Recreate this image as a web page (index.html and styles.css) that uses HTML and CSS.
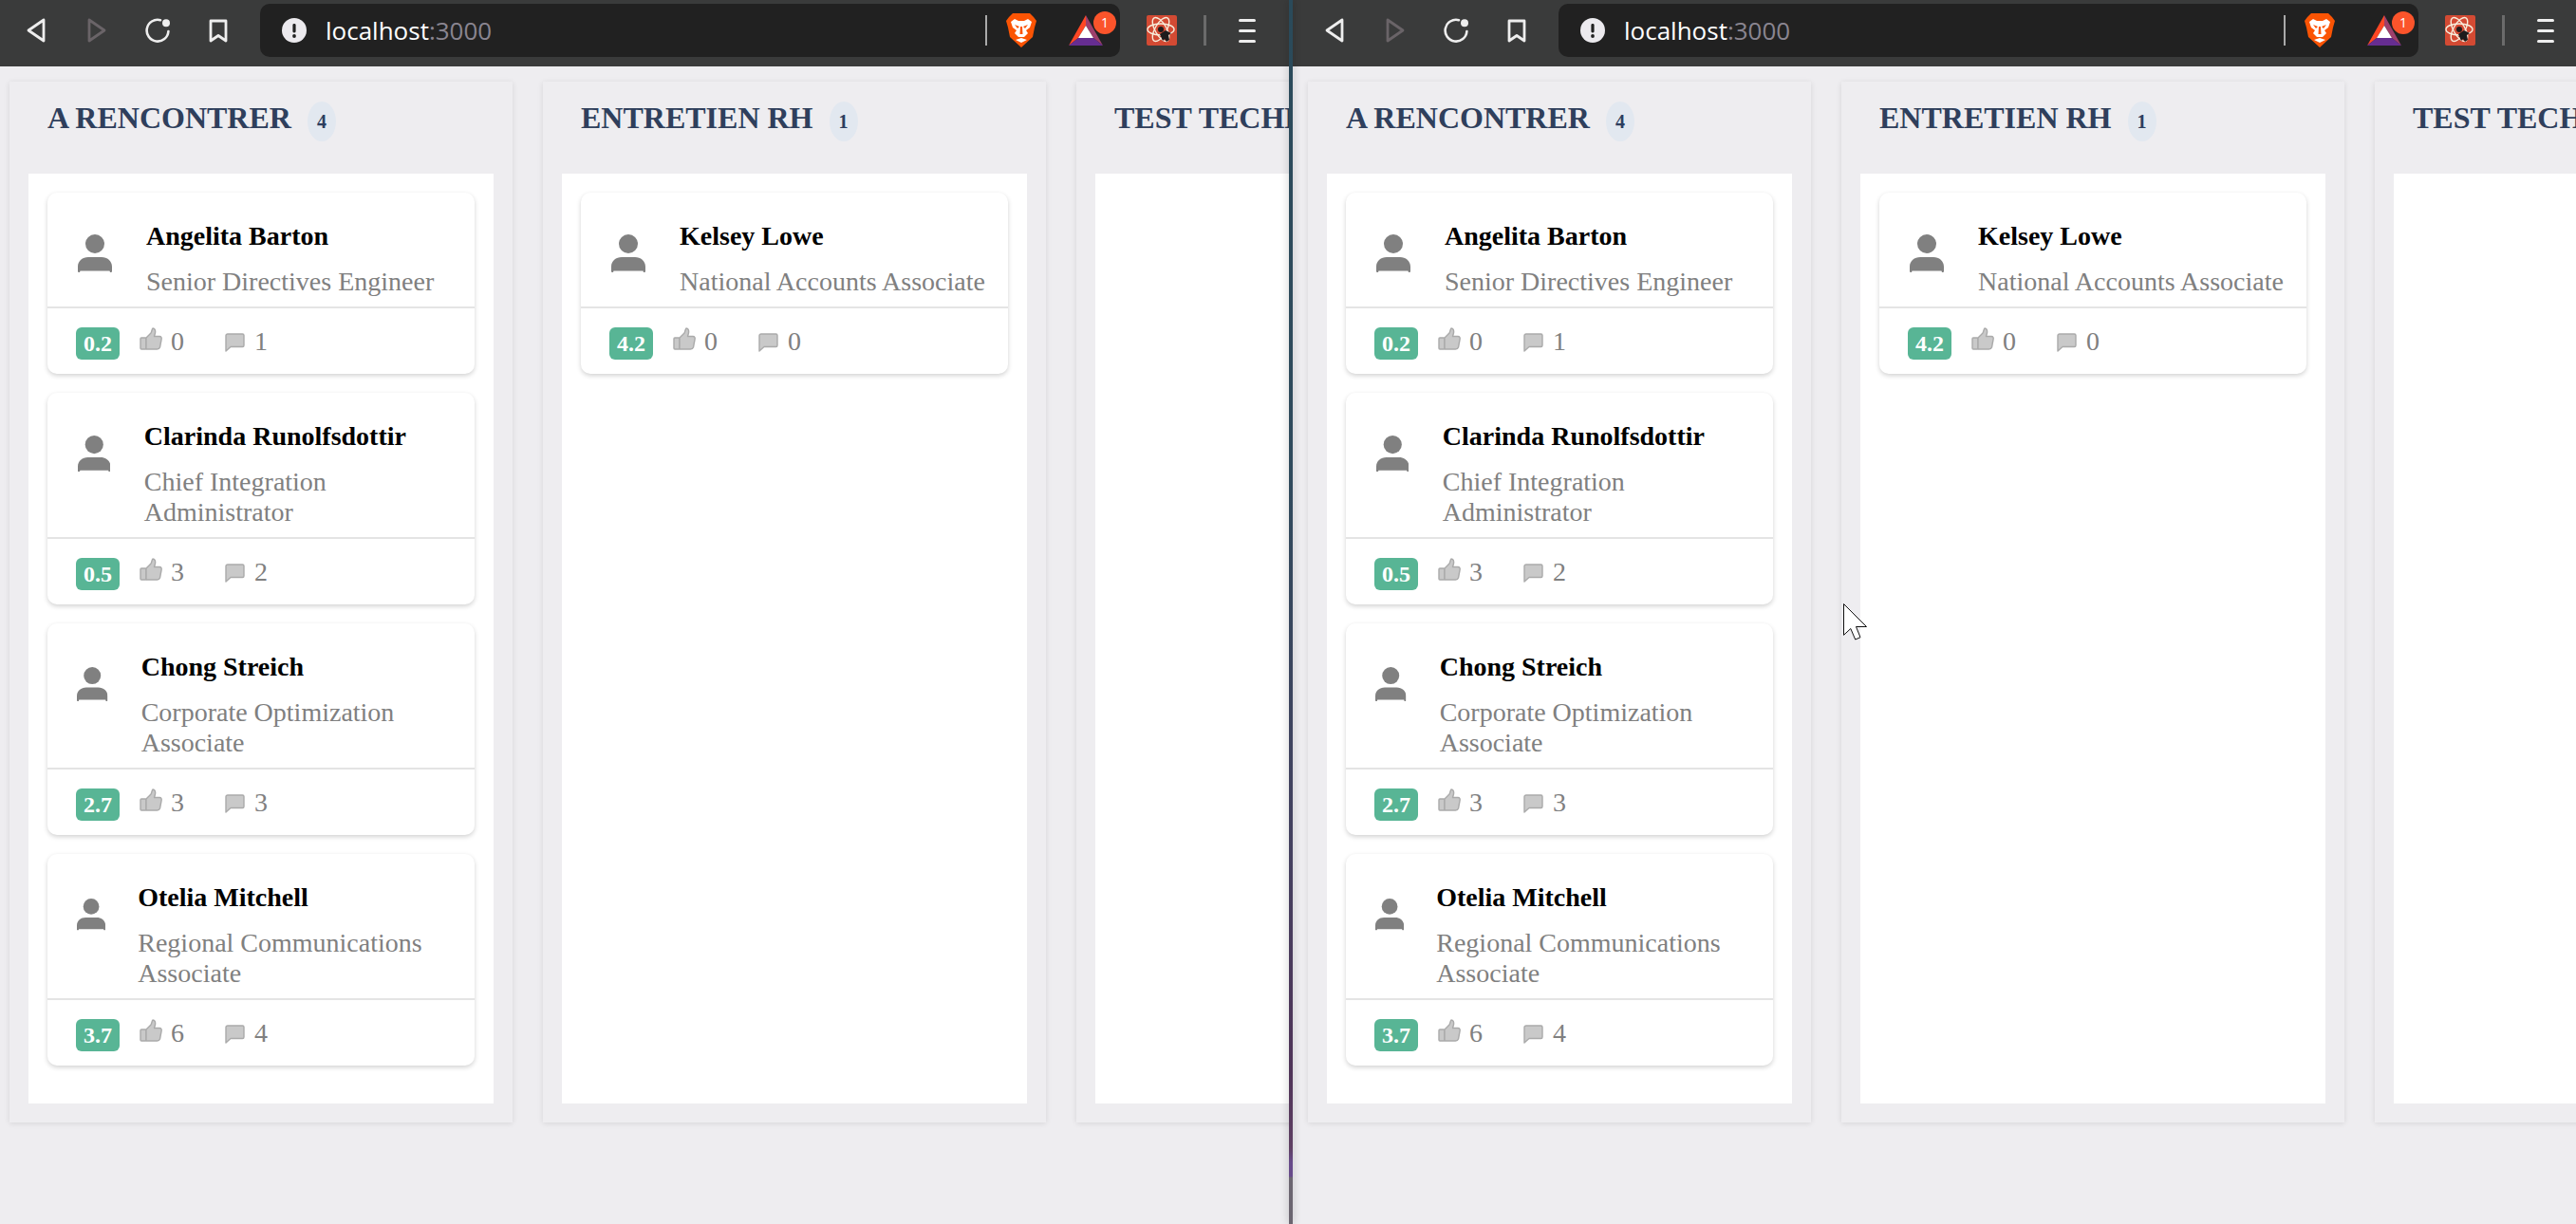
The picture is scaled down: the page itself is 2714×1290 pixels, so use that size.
FILE: index.html
```html
<!DOCTYPE html>
<html lang="en">
<head>
    <meta charset="UTF-8">
    <title>Kanban</title>
    <link rel="stylesheet" href="styles.css">
</head>
<body>
    <svg class="defs" width="0" height="0">
        <defs>
            <symbol id="i-back" viewBox="0 0 20 26"><path d="M18 2 L2 13 L18 24 Z" fill="none" stroke="currentColor" stroke-width="2.8" stroke-linejoin="round"/></symbol>
            <symbol id="i-forward" viewBox="0 0 20 26"><path d="M2 2 L18 13 L2 24 Z" fill="none" stroke="currentColor" stroke-width="2.8" stroke-linejoin="round"/></symbol>
            <symbol id="i-reload" viewBox="0 0 26 26"><path d="M16 2.2 A11.4 11.4 0 1 0 24.4 14" fill="none" stroke="currentColor" stroke-width="2.6" stroke-linecap="round"/><circle cx="22" cy="5.2" r="4" fill="currentColor"/></symbol>
            <symbol id="i-bookmark" viewBox="0 0 20 25"><path d="M2 2 H18 V23 L10 17.5 L2 23 Z" fill="none" stroke="currentColor" stroke-width="2.8" stroke-linejoin="round"/></symbol>
            <symbol id="i-alert" viewBox="0 0 26 26"><circle cx="13" cy="13" r="13" fill="#eceaee"/><rect x="11.4" y="6" width="3.2" height="9.5" rx="1.4" fill="#212121"/><circle cx="13" cy="19" r="1.9" fill="#212121"/></symbol>
            <symbol id="i-brave" viewBox="0 0 32 36"><path d="M7 0 H25 L29 4 L32 8 L30 15 L28 25 L16 36 L4 25 L2 15 L0 8 L3 4 Z" fill="#fb5404"/><path d="M5 9 L9 6 L13 8 H19 L23 6 L27 9 L25 15 L21 18 L23 21 L19 25 H13 L9 21 L11 18 L7 15 Z" fill="#fff"/><path d="M9 12 L14 14 L12 16 Z M23 12 L18 14 L20 16 Z M15 14 H17 L17.5 22 H14.5 Z" fill="#fb5404"/><path d="M10 28 L16 26 L22 28 L16 31 Z" fill="#fff"/></symbol>
            <symbol id="i-bat" viewBox="0 0 36 32"><polygon points="18,0 0,32 10,24 18,11" fill="#ff4724"/><polygon points="18,0 36,32 26,24 18,11" fill="#9e3f6c"/><polygon points="0,32 36,32 26,24 10,24" fill="#662d91"/><polygon points="18,11 26,24 10,24" fill="#fff"/></symbol>
            <symbol id="i-atom" viewBox="0 0 32 32"><rect width="32" height="32" rx="2" fill="#d34a33"/><g fill="none" stroke="#f7eedd" stroke-width="1.4"><ellipse cx="15" cy="15" rx="14" ry="6"/><ellipse cx="15" cy="15" rx="14" ry="6" transform="rotate(60 15 15)"/><ellipse cx="15" cy="15" rx="14" ry="6" transform="rotate(120 15 15)"/></g><circle cx="15" cy="15" r="3" fill="#1e1c1c"/><path d="M14 20 L20 16 L26 19 L23 21 L24 26 L21 28 L19 25 L17 27 Z" fill="#1e1c1c"/></symbol>
            <symbol id="i-person" viewBox="0 0 36 40"><circle cx="18" cy="10" r="10"/><path d="M0 39 V34 C0 28 5 24 11 24 H25 C31 24 36 28 36 34 V39 Q36 40 35 40 H34 L33.5 38.4 H2.5 L2 40 H1 Q0 40 0 39 Z"/></symbol>
            <symbol id="i-thumb" viewBox="0 0 24 24"><g fill="#c9c9c9" stroke="#aaa" stroke-width="1.4" stroke-linejoin="round"><rect x="1" y="11" width="6" height="12" rx="1"/><path d="M7 11 L12 6 C13 4 13 2 14 1 C16 1 17 3 16.5 6 L15.5 9.5 H21 C23 9.5 23.5 11 23 13 L21.5 21 C21 22.5 20 23 18.5 23 H7 Z"/></g></symbol>
            <symbol id="i-comment" viewBox="0 0 21 20"><path d="M3 1 H18.5 Q20 1 20 2.5 V13 Q20 14.5 18.5 14.5 H6 L1 19 V3 Q1 1 3 1 Z" fill="#c9c9c9" stroke="#aaa" stroke-width="1.4" stroke-linejoin="round"/></symbol>
        </defs>
    </svg>

    <div class="split">
        <!-- left window -->
        <section class="pane pane-left">
            <header class="toolbar">
                <nav class="nav-btns">
                    <span class="nav-btn"><svg class="ic-back"><use href="#i-back"/></svg></span>
                    <span class="nav-btn muted"><svg class="ic-back"><use href="#i-forward"/></svg></span>
                    <span class="nav-btn"><svg class="ic-reload"><use href="#i-reload"/></svg></span>
                    <span class="nav-btn"><svg class="ic-bookmark"><use href="#i-bookmark"/></svg></span>
                </nav>
                <div class="address">
                    <svg class="ic-alert"><use href="#i-alert"/></svg>
                    <span class="url">localhost<span class="url-port">:3000</span></span>
                    <span class="address-sep"></span>
                    <svg class="ic-brave"><use href="#i-brave"/></svg>
                    <span class="bat"><svg class="ic-bat"><use href="#i-bat"/></svg><span class="bat-count">1</span></span>
                </div>
                <svg class="ic-atom"><use href="#i-atom"/></svg>
                <span class="toolbar-sep"></span>
                <span class="menu"><i></i><i></i><i></i></span>
            </header>
            <main class="board">
                <div class="column">
                    <div class="column-head"><h2>A RENCONTRER</h2><span class="count">4</span></div>
                    <div class="column-list">
                        <article class="card">
                            <div class="card-head">
                                <div class="avatar"><svg viewBox="0 0 36 40"><use href="#i-person"/></svg></div>
                                <div class="who"><h3>Angelita Barton</h3><p>Senior Directives Engineer</p></div>
                            </div>
                            <div class="card-foot">
                                <span class="score">0.2</span>
                                <span class="stat stat-likes"><svg class="ic-thumb"><use href="#i-thumb"/></svg>0</span>
                                <span class="stat stat-comments"><svg class="ic-comment"><use href="#i-comment"/></svg>1</span>
                            </div>
                        </article>
                        <article class="card">
                            <div class="card-head">
                                <div class="avatar"><svg viewBox="0 0 36 40"><use href="#i-person"/></svg></div>
                                <div class="who"><h3>Clarinda Runolfsdottir</h3><p>Chief Integration Administrator</p></div>
                            </div>
                            <div class="card-foot">
                                <span class="score">0.5</span>
                                <span class="stat stat-likes"><svg class="ic-thumb"><use href="#i-thumb"/></svg>3</span>
                                <span class="stat stat-comments"><svg class="ic-comment"><use href="#i-comment"/></svg>2</span>
                            </div>
                        </article>
                        <article class="card">
                            <div class="card-head">
                                <div class="avatar"><svg viewBox="0 0 36 40"><use href="#i-person"/></svg></div>
                                <div class="who"><h3>Chong Streich</h3><p>Corporate Optimization Associate</p></div>
                            </div>
                            <div class="card-foot">
                                <span class="score">2.7</span>
                                <span class="stat stat-likes"><svg class="ic-thumb"><use href="#i-thumb"/></svg>3</span>
                                <span class="stat stat-comments"><svg class="ic-comment"><use href="#i-comment"/></svg>3</span>
                            </div>
                        </article>
                        <article class="card">
                            <div class="card-head">
                                <div class="avatar"><svg viewBox="0 0 36 40"><use href="#i-person"/></svg></div>
                                <div class="who"><h3>Otelia Mitchell</h3><p>Regional Communications Associate</p></div>
                            </div>
                            <div class="card-foot">
                                <span class="score">3.7</span>
                                <span class="stat stat-likes"><svg class="ic-thumb"><use href="#i-thumb"/></svg>6</span>
                                <span class="stat stat-comments"><svg class="ic-comment"><use href="#i-comment"/></svg>4</span>
                            </div>
                        </article>
                    </div>
                </div>
                <div class="column">
                    <div class="column-head"><h2>ENTRETIEN RH</h2><span class="count">1</span></div>
                    <div class="column-list">
                        <article class="card">
                            <div class="card-head">
                                <div class="avatar"><svg viewBox="0 0 36 40"><use href="#i-person"/></svg></div>
                                <div class="who"><h3>Kelsey Lowe</h3><p>National Accounts Associate</p></div>
                            </div>
                            <div class="card-foot">
                                <span class="score">4.2</span>
                                <span class="stat stat-likes"><svg class="ic-thumb"><use href="#i-thumb"/></svg>0</span>
                                <span class="stat stat-comments"><svg class="ic-comment"><use href="#i-comment"/></svg>0</span>
                            </div>
                        </article>
                    </div>
                </div>
                <div class="column">
                    <div class="column-head"><h2>TEST TECHNIQUE</h2></div>
                    <div class="column-list"></div>
                </div>
            </main>
        </section>

        <div class="split-line"></div>

        <!-- right window, same page -->
        <section class="pane pane-right">
            <header class="toolbar">
                <nav class="nav-btns">
                    <span class="nav-btn"><svg class="ic-back"><use href="#i-back"/></svg></span>
                    <span class="nav-btn muted"><svg class="ic-back"><use href="#i-forward"/></svg></span>
                    <span class="nav-btn"><svg class="ic-reload"><use href="#i-reload"/></svg></span>
                    <span class="nav-btn"><svg class="ic-bookmark"><use href="#i-bookmark"/></svg></span>
                </nav>
                <div class="address">
                    <svg class="ic-alert"><use href="#i-alert"/></svg>
                    <span class="url">localhost<span class="url-port">:3000</span></span>
                    <span class="address-sep"></span>
                    <svg class="ic-brave"><use href="#i-brave"/></svg>
                    <span class="bat"><svg class="ic-bat"><use href="#i-bat"/></svg><span class="bat-count">1</span></span>
                </div>
                <svg class="ic-atom"><use href="#i-atom"/></svg>
                <span class="toolbar-sep"></span>
                <span class="menu"><i></i><i></i><i></i></span>
            </header>
            <main class="board">
                <div class="column">
                    <div class="column-head"><h2>A RENCONTRER</h2><span class="count">4</span></div>
                    <div class="column-list">
                        <article class="card">
                            <div class="card-head">
                                <div class="avatar"><svg viewBox="0 0 36 40"><use href="#i-person"/></svg></div>
                                <div class="who"><h3>Angelita Barton</h3><p>Senior Directives Engineer</p></div>
                            </div>
                            <div class="card-foot">
                                <span class="score">0.2</span>
                                <span class="stat stat-likes"><svg class="ic-thumb"><use href="#i-thumb"/></svg>0</span>
                                <span class="stat stat-comments"><svg class="ic-comment"><use href="#i-comment"/></svg>1</span>
                            </div>
                        </article>
                        <article class="card">
                            <div class="card-head">
                                <div class="avatar"><svg viewBox="0 0 36 40"><use href="#i-person"/></svg></div>
                                <div class="who"><h3>Clarinda Runolfsdottir</h3><p>Chief Integration Administrator</p></div>
                            </div>
                            <div class="card-foot">
                                <span class="score">0.5</span>
                                <span class="stat stat-likes"><svg class="ic-thumb"><use href="#i-thumb"/></svg>3</span>
                                <span class="stat stat-comments"><svg class="ic-comment"><use href="#i-comment"/></svg>2</span>
                            </div>
                        </article>
                        <article class="card">
                            <div class="card-head">
                                <div class="avatar"><svg viewBox="0 0 36 40"><use href="#i-person"/></svg></div>
                                <div class="who"><h3>Chong Streich</h3><p>Corporate Optimization Associate</p></div>
                            </div>
                            <div class="card-foot">
                                <span class="score">2.7</span>
                                <span class="stat stat-likes"><svg class="ic-thumb"><use href="#i-thumb"/></svg>3</span>
                                <span class="stat stat-comments"><svg class="ic-comment"><use href="#i-comment"/></svg>3</span>
                            </div>
                        </article>
                        <article class="card">
                            <div class="card-head">
                                <div class="avatar"><svg viewBox="0 0 36 40"><use href="#i-person"/></svg></div>
                                <div class="who"><h3>Otelia Mitchell</h3><p>Regional Communications Associate</p></div>
                            </div>
                            <div class="card-foot">
                                <span class="score">3.7</span>
                                <span class="stat stat-likes"><svg class="ic-thumb"><use href="#i-thumb"/></svg>6</span>
                                <span class="stat stat-comments"><svg class="ic-comment"><use href="#i-comment"/></svg>4</span>
                            </div>
                        </article>
                    </div>
                </div>
                <div class="column">
                    <div class="column-head"><h2>ENTRETIEN RH</h2><span class="count">1</span></div>
                    <div class="column-list">
                        <article class="card">
                            <div class="card-head">
                                <div class="avatar"><svg viewBox="0 0 36 40"><use href="#i-person"/></svg></div>
                                <div class="who"><h3>Kelsey Lowe</h3><p>National Accounts Associate</p></div>
                            </div>
                            <div class="card-foot">
                                <span class="score">4.2</span>
                                <span class="stat stat-likes"><svg class="ic-thumb"><use href="#i-thumb"/></svg>0</span>
                                <span class="stat stat-comments"><svg class="ic-comment"><use href="#i-comment"/></svg>0</span>
                            </div>
                        </article>
                    </div>
                </div>
                <div class="column">
                    <div class="column-head"><h2>TEST TECHNIQUE</h2></div>
                    <div class="column-list"></div>
                </div>
            </main>
        </section>
    </div>

    <!-- mouse pointer over the page -->
    <svg class="cursor" viewBox="0 0 26 40"><path d="M0.5 0.5 L24.5 24.5 H13.5 L18 35.7 L12.7 38 L7.8 26.5 L0.5 33.3 Z" fill="#fff" stroke="#111" stroke-width="1"/></svg>
</body>
</html>
```

FILE: styles.css
```css
/* Page base */
* {
    box-sizing: border-box;
}

html, body {
    margin: 0;
    height: 100%;
}

body {
    background-color: #eeedf0;
    font-family: "Liberation Serif", serif;
    overflow: hidden;
    position: relative;
}

.defs {
    display: block;
    height: 0;
}

.split {
    display: flex;
    height: 1290px;
}

.pane {
    overflow: hidden;
    height: 100%;
}

.pane-left {
    flex: 0 0 1358px;
}

.pane-right {
    flex: 1;
    min-width: 0;
    background-image: linear-gradient(#3a3b3b 70px, #eeedf0 70px);
    padding-left: 6px;
}

.split-line {
    flex: 0 0 4px;
    background: linear-gradient(#2a4a5a 0, #2f4a5c 500px, #44405f 900px, #4f3358 1130px, #5e3f62 1210px, #674a8a 1225px, #674a8a 1240px, #6b6570 1241px);
    box-shadow: 0 0 8px rgba(0, 0, 0, 0.25);
    position: relative;
}

/* Browser toolbar */
.toolbar {
    display: flex;
    align-items: center;
    height: 70px;
    padding: 4px 0 10px;
    background-color: #3a3b3b;
}

.nav-btns {
    display: flex;
    padding-left: 6px;
}

.nav-btn {
    display: flex;
    justify-content: center;
    align-items: center;
    width: 64px;
    color: #eeeeee;
}

.nav-btn.muted {
    color: #6a6468;
}

.ic-back {
    width: 20px;
    height: 26px;
}

.ic-reload {
    width: 26px;
    height: 26px;
}

.ic-bookmark {
    width: 20px;
    height: 25px;
}

.address {
    display: flex;
    align-items: center;
    flex: 0 0 906px;
    height: 56px;
    margin-left: 12px;
    padding-left: 23px;
    background-color: #212121;
    border-radius: 10px;
}

.ic-alert {
    width: 26px;
    height: 26px;
}

.url {
    margin-left: 20px;
    font-family: "Open Sans", sans-serif;
    font-size: 26px;
    color: #ffffff;
}

.url-port {
    color: #8a8590;
}

.address-sep {
    width: 2px;
    height: 32px;
    margin-left: auto;
    background-color: #aaaaaa;
}

.ic-brave {
    width: 32px;
    height: 36px;
    margin-left: 20px;
}

.bat {
    position: relative;
    display: flex;
    margin: 0 18px 0 34px;
}

.ic-bat {
    width: 36px;
    height: 32px;
}

.bat-count {
    position: absolute;
    top: -4px;
    left: 26px;
    width: 24px;
    height: 24px;
    border-radius: 50%;
    background-color: #fb542b;
    color: #fff;
    font-family: "Open Sans", sans-serif;
    font-size: 14px;
    line-height: 24px;
    text-align: center;
}

.ic-atom {
    flex: none;
    width: 32px;
    height: 32px;
    margin-left: 28px;
}

.toolbar-sep {
    flex: none;
    width: 3px;
    height: 32px;
    margin-left: 28px;
    background-color: #6b6b6b;
}

.menu {
    display: flex;
    flex-direction: column;
    gap: 8px;
    flex: none;
    width: 18px;
    margin-left: 34px;
}

.menu i {
    display: block;
    height: 3px;
    border-radius: 2px;
    background-color: #eeeeee;
}

/* Kanban board */
.board {
    display: flex;
    gap: 32px;
    padding: 16px 0 0 10px;
}

.column {
    flex: 0 0 530px;
    padding: 20px;
    background-color: #eeedf0;
    box-shadow: 0 1px 6px rgba(0, 0, 0, 0.1);
}

.column-head {
    display: flex;
    align-items: flex-start;
    gap: 17px;
    height: 77px;
    padding-left: 20px;
    white-space: nowrap;
}

.column-head h2 {
    margin: 0;
    font-size: 32px;
    line-height: 37px;
    font-weight: bold;
    color: #2f3f5c;
}

.count {
    display: flex;
    justify-content: center;
    align-items: center;
    width: 30px;
    height: 42px;
    margin-top: 1px;
    border-radius: 50%;
    background-color: #e2e8f0;
    color: #2d3e5f;
    font-size: 20px;
    font-weight: bold;
}

.column-list {
    height: 980px;
    padding: 20px;
    background-color: #ffffff;
}

/* Candidate card */
.card {
    margin-bottom: 20px;
    background-color: #ffffff;
    border-radius: 10px;
    box-shadow: 0 2px 5px rgba(0, 0, 0, 0.18);
}

.card-head {
    display: flex;
    padding: 30px 8px 10px 23px;
    border-bottom: 2px solid #e4e4e4;
}

.avatar {
    display: flex;
    justify-content: center;
    align-items: center;
    flex: 0 1 54px;
    min-width: 0;
    height: 68px;
    fill: #808080;
}

.avatar svg {
    width: 66.67%;
}

.who {
    flex: 0 1 auto;
    margin-left: 27px;
}

.who h3 {
    margin: 0 0 16px;
    font-size: 28px;
    line-height: 32px;
    font-weight: bold;
    color: #000000;
}

.who p {
    margin: 0;
    font-size: 28px;
    line-height: 32px;
    color: #808080;
}

.card-foot {
    display: flex;
    align-items: center;
    padding: 19px 30px 14px;
}

.score {
    width: 46px;
    height: 34px;
    border-radius: 6px;
    background-color: #58b595;
    color: #ffffff;
    font-size: 24px;
    font-weight: bold;
    line-height: 34px;
    text-align: center;
}

.stat {
    display: flex;
    align-items: center;
    margin-bottom: 4px;
    font-size: 28px;
    line-height: 32px;
    color: #808080;
}

.stat-likes {
    width: 90px;
    margin-left: 21px;
}

.ic-thumb {
    width: 24px;
    height: 24px;
    margin: 0 9px 6px 0;
}

.ic-comment {
    width: 21px;
    height: 20px;
    margin: 2px 10px 0 0;
}

.cursor {
    position: absolute;
    top: 636px;
    left: 1942px;
    width: 26px;
    height: 40px;
}
```
